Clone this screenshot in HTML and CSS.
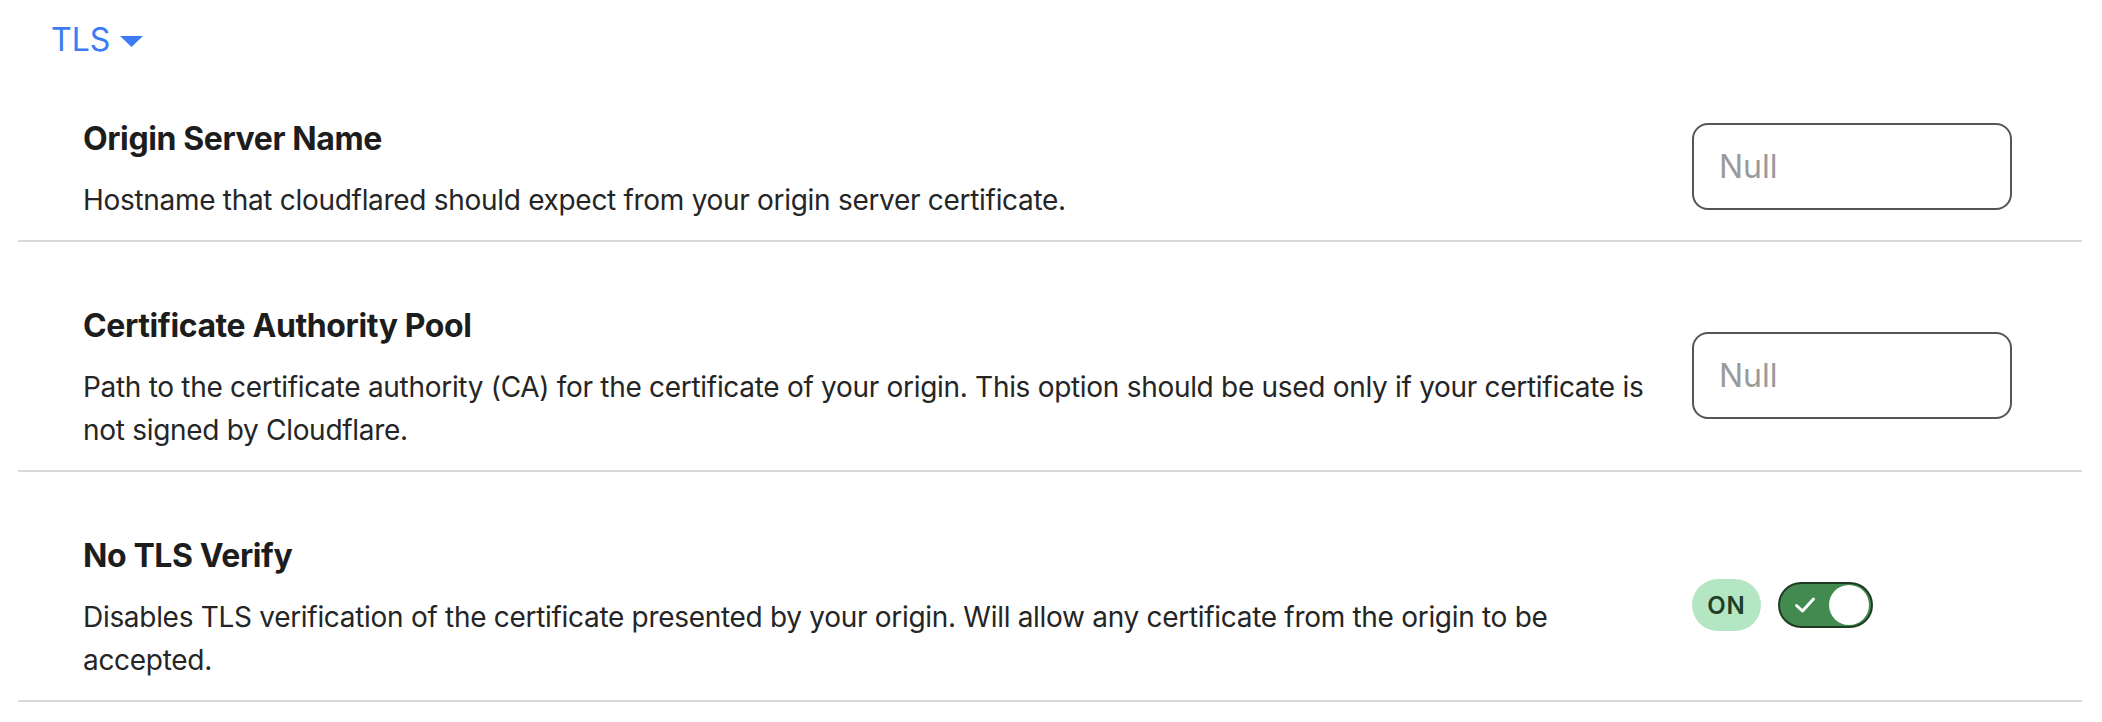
FILE: index.html
```html
<!DOCTYPE html>
<html lang="en">
<head>
<meta charset="utf-8">
<title>TLS settings</title>
<link rel="stylesheet" href="styles.css">
</head>
<body>
<div class="page">
  <div class="section-head">
    <span class="section-label">TLS</span>
    <svg class="caret" width="23" height="11" viewBox="0 0 23 11"><path d="M0 0H23L11.5 11Z" fill="#3b7cf5"/></svg>
  </div>
  <div class="settings">
    <div class="row first">
      <div class="text">
        <h3 class="title">Origin Server Name</h3>
        <p class="desc">Hostname that cloudflared should expect from your origin server certificate.</p>
      </div>
      <div class="control">
        <input class="field" type="text" placeholder="Null">
      </div>
    </div>
    <div class="row">
      <div class="text">
        <h3 class="title">Certificate Authority Pool</h3>
        <p class="desc">Path to the certificate authority (CA) for the certificate of your origin. This option should be used only if your certificate is not signed by Cloudflare.</p>
      </div>
      <div class="control">
        <input class="field" type="text" placeholder="Null">
      </div>
    </div>
    <div class="row">
      <div class="text">
        <h3 class="title">No TLS Verify</h3>
        <p class="desc">Disables TLS verification of the certificate presented by your origin. Will allow any certificate from the origin to be accepted.</p>
      </div>
      <div class="control">
        <div class="switch-group">
          <span class="state">ON</span>
          <span class="switch">
            <svg class="check" width="22" height="18" viewBox="0 0 22 18"><path d="M2.5 9.5L8.5 15L19.5 3" fill="none" stroke="#fff" stroke-width="3" stroke-linecap="round" stroke-linejoin="round"/></svg>
            <span class="knob"></span>
          </span>
        </div>
      </div>
    </div>
  </div>
</div>
</body>
</html>
```

FILE: styles.css
```css
* { box-sizing: border-box; }
html, body { margin: 0; padding: 0; background: #fff; }
body {
  font-family: Inter, "Noto Sans", "Liberation Sans", sans-serif;
  color: #1f1f1f;
}
.page { padding: 0 20px 0 18px; }
.section-head {
  display: flex;
  align-items: center;
  gap: 10px;
  padding: 16px 0 0 33px;
  height: 64px;
}
.section-label {
  font-size: 32px;
  line-height: 48px;
  color: #3b7cf5;
}
.caret { margin-top: 2px; }
.settings { display: flex; flex-direction: column; }
.row {
  display: flex;
  align-items: center;
  gap: 40px;
  padding: 62px 70px 18px 65px;
  border-bottom: 2px solid #d9d9d9;
}
.row.first { padding-top: 53px; }
.text { flex: 1; min-width: 0; }
.title {
  margin: 0;
  font-size: 32px;
  line-height: 44px;
  font-weight: 700;
  letter-spacing: -0.4px;
  color: #1d1d1d;
}
.desc {
  margin: 18px 0 0;
  font-size: 28px;
  line-height: 43px;
  letter-spacing: -0.3px;
  color: #252525;
}
.control { width: 320px; flex: none; margin-top: -6px; }
.field {
  display: block;
  width: 320px;
  height: 87px;
  border: 2px solid #555;
  border-radius: 16px;
  padding: 0 25px;
  font-family: Inter, "Noto Sans", sans-serif;
  font-size: 32px;
  color: #222;
  background: #fff;
  outline: none;
}
.field::placeholder { color: #9a9a9a; }
.switch-group { display: flex; align-items: center; gap: 17px; }
.state {
  display: flex;
  align-items: center;
  justify-content: center;
  width: 69px;
  height: 52px;
  border-radius: 26px;
  background: #b5e6c4;
  color: #1f3f26;
  font-size: 24px;
  font-weight: 600;
  letter-spacing: 1px;
}
.switch {
  position: relative;
  display: flex;
  align-items: center;
  width: 95px;
  height: 46px;
  border-radius: 23px;
  background: #428a50;
  border: 2px solid #1d3d22;
  padding-left: 14px;
}
.knob {
  position: absolute;
  right: 2px;
  top: 1px;
  width: 40px;
  height: 40px;
  border-radius: 50%;
  background: #fff;
}
```
